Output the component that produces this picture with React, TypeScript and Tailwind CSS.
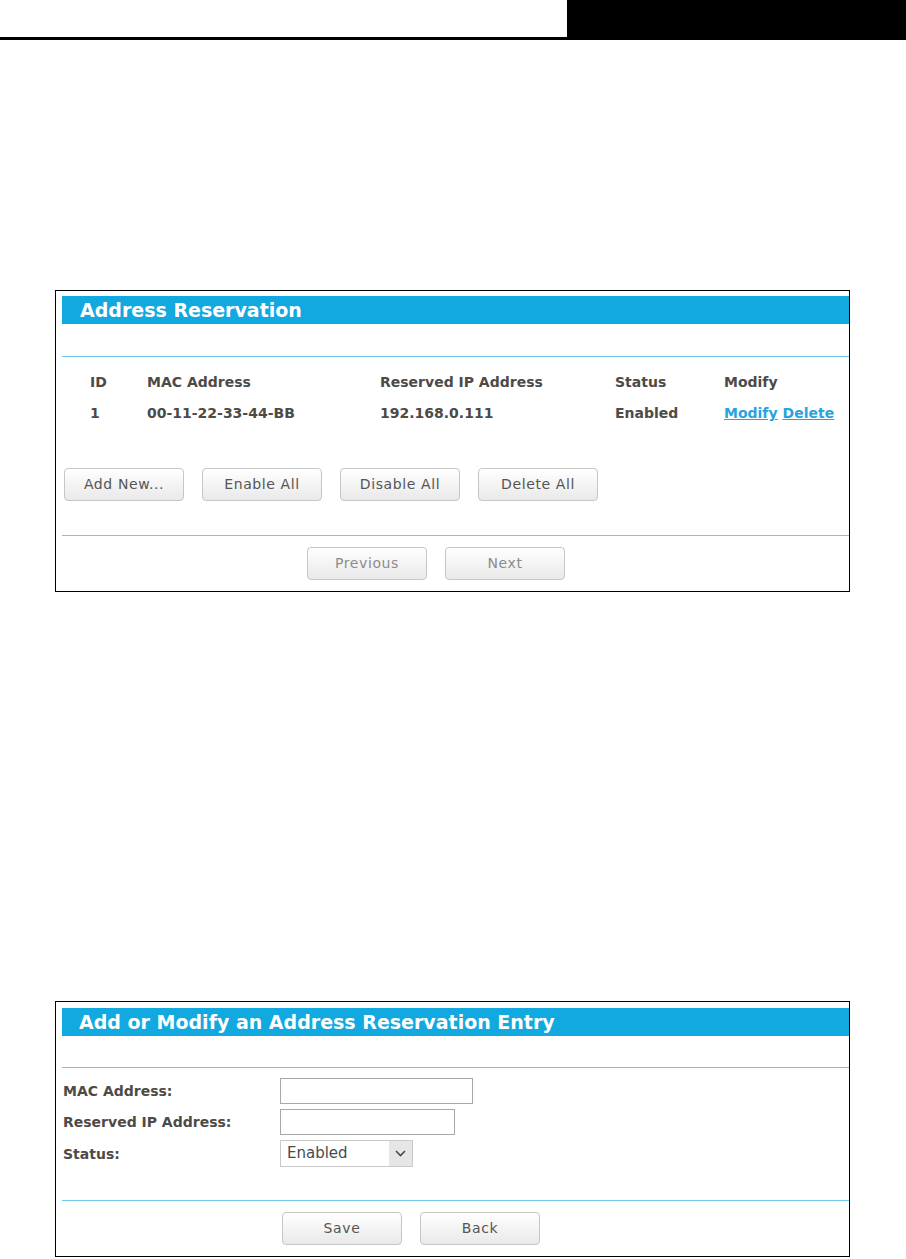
import React from 'react';

const Btn = ({ label, muted }: { label: string; muted?: boolean }) => (
  <button
    type="button"
    className={`w-[120px] h-[33px] shrink-0 rounded-[4px] border border-[#c6c6c6] bg-linear-to-b from-white to-[#e9e9e9] font-['DejaVu_Sans',sans-serif] text-[14px] tracking-[0.6px] ${
      muted ? 'text-[#8c8c8c]' : 'text-[#555555]'
    }`}
  >
    {label}
  </button>
);

const Title = ({ children }: { children: React.ReactNode }) => (
  <div className="h-[28px] bg-[#12a8e0] flex items-center pl-[18px]">
    <span className="text-white font-bold text-[19px] leading-none">{children}</span>
  </div>
);

const Rule = () => <div className="h-px bg-[#72c6ec]" />;

export default function App() {
  return (
    <div className="w-[906px] h-[1259px] bg-white font-['DejaVu_Sans',sans-serif] text-[#4d4a48]">
      {/* page header */}
      <div className="h-[37px] flex justify-end">
        <div className="w-[339px] bg-black" />
      </div>
      <div className="h-[3px] bg-black" />

      {/* Address Reservation */}
      <div className="ml-[55px] mt-[250px] w-[795px] border border-black pl-[6px] pt-[5px] pb-[11px]">
        <Title>Address Reservation</Title>
        <div className="h-[32px]" />
        <Rule />
        <div className="pt-[10px] pl-[28px] font-bold text-[14px]">
          <div className="grid grid-cols-[57px_233px_235px_109px_1fr] h-[31px] items-center">
            <span>ID</span>
            <span>MAC Address</span>
            <span>Reserved IP Address</span>
            <span>Status</span>
            <span>Modify</span>
          </div>
          <div className="grid grid-cols-[57px_233px_235px_109px_1fr] h-[31px] items-center">
            <span>1</span>
            <span>00-11-22-33-44-BB</span>
            <span>192.168.0.111</span>
            <span>Enabled</span>
            <span className="flex gap-[5px] text-[#27a4df] underline">
              <a href="#">Modify</a>
              <a href="#">Delete</a>
            </span>
          </div>
        </div>
        <div className="mt-[39px] ml-[2px] flex gap-[18px]">
          <Btn label="Add New..." />
          <Btn label="Enable All" />
          <Btn label="Disable All" />
          <Btn label="Delete All" />
        </div>
        <div className="h-[34px]" />
        <Rule />
        <div className="mt-[11px] ml-[245px] flex gap-[18px]">
          <Btn label="Previous" muted />
          <Btn label="Next" muted />
        </div>
      </div>

      {/* Add or Modify entry */}
      <div className="ml-[55px] mt-[409px] w-[795px] border border-black pl-[6px] pt-[6px] pb-[11px]">
        <div className="h-[28px] bg-[#12a8e0] flex items-center pl-[17px]">
          <span className="text-white font-bold text-[19px] leading-none">
            Add or Modify an Address Reservation Entry
          </span>
        </div>
        <div className="h-[31px]" />
        <Rule />
        <div className="pt-[10px] pl-px flex flex-col gap-[5px] font-bold text-[14px]">
          <div className="flex items-center h-[26px]">
            <span className="w-[217px]">MAC Address:</span>
            <div className="w-[193px] h-[26px] border border-[#a8a8a8] bg-white" />
          </div>
          <div className="flex items-center h-[26px]">
            <span className="w-[217px]">Reserved IP Address:</span>
            <div className="w-[175px] h-[26px] border border-[#a8a8a8] bg-white" />
          </div>
          <div className="flex items-center h-[27px]">
            <span className="w-[217px] mt-[2px]">Status:</span>
            <div className="w-[133px] h-[27px] border border-[#c9c9c9] bg-white flex items-stretch">
              <span className="flex-1 flex items-center pl-[6px] font-normal text-[15px] text-[#4a4a4a]">
                Enabled
              </span>
              <span className="w-[23px] bg-[#e6e6e6] flex items-center justify-center">
                <svg width="11" height="7" viewBox="0 0 11 7" fill="none">
                  <path d="M1 1l4.5 4.5L10 1" stroke="#4a4a4a" strokeWidth="1.6" />
                </svg>
              </span>
            </div>
          </div>
        </div>
        <div className="h-[33px]" />
        <Rule />
        <div className="mt-[11px] ml-[220px] flex gap-[18px]">
          <Btn label="Save" />
          <Btn label="Back" />
        </div>
      </div>
    </div>
  );
}
